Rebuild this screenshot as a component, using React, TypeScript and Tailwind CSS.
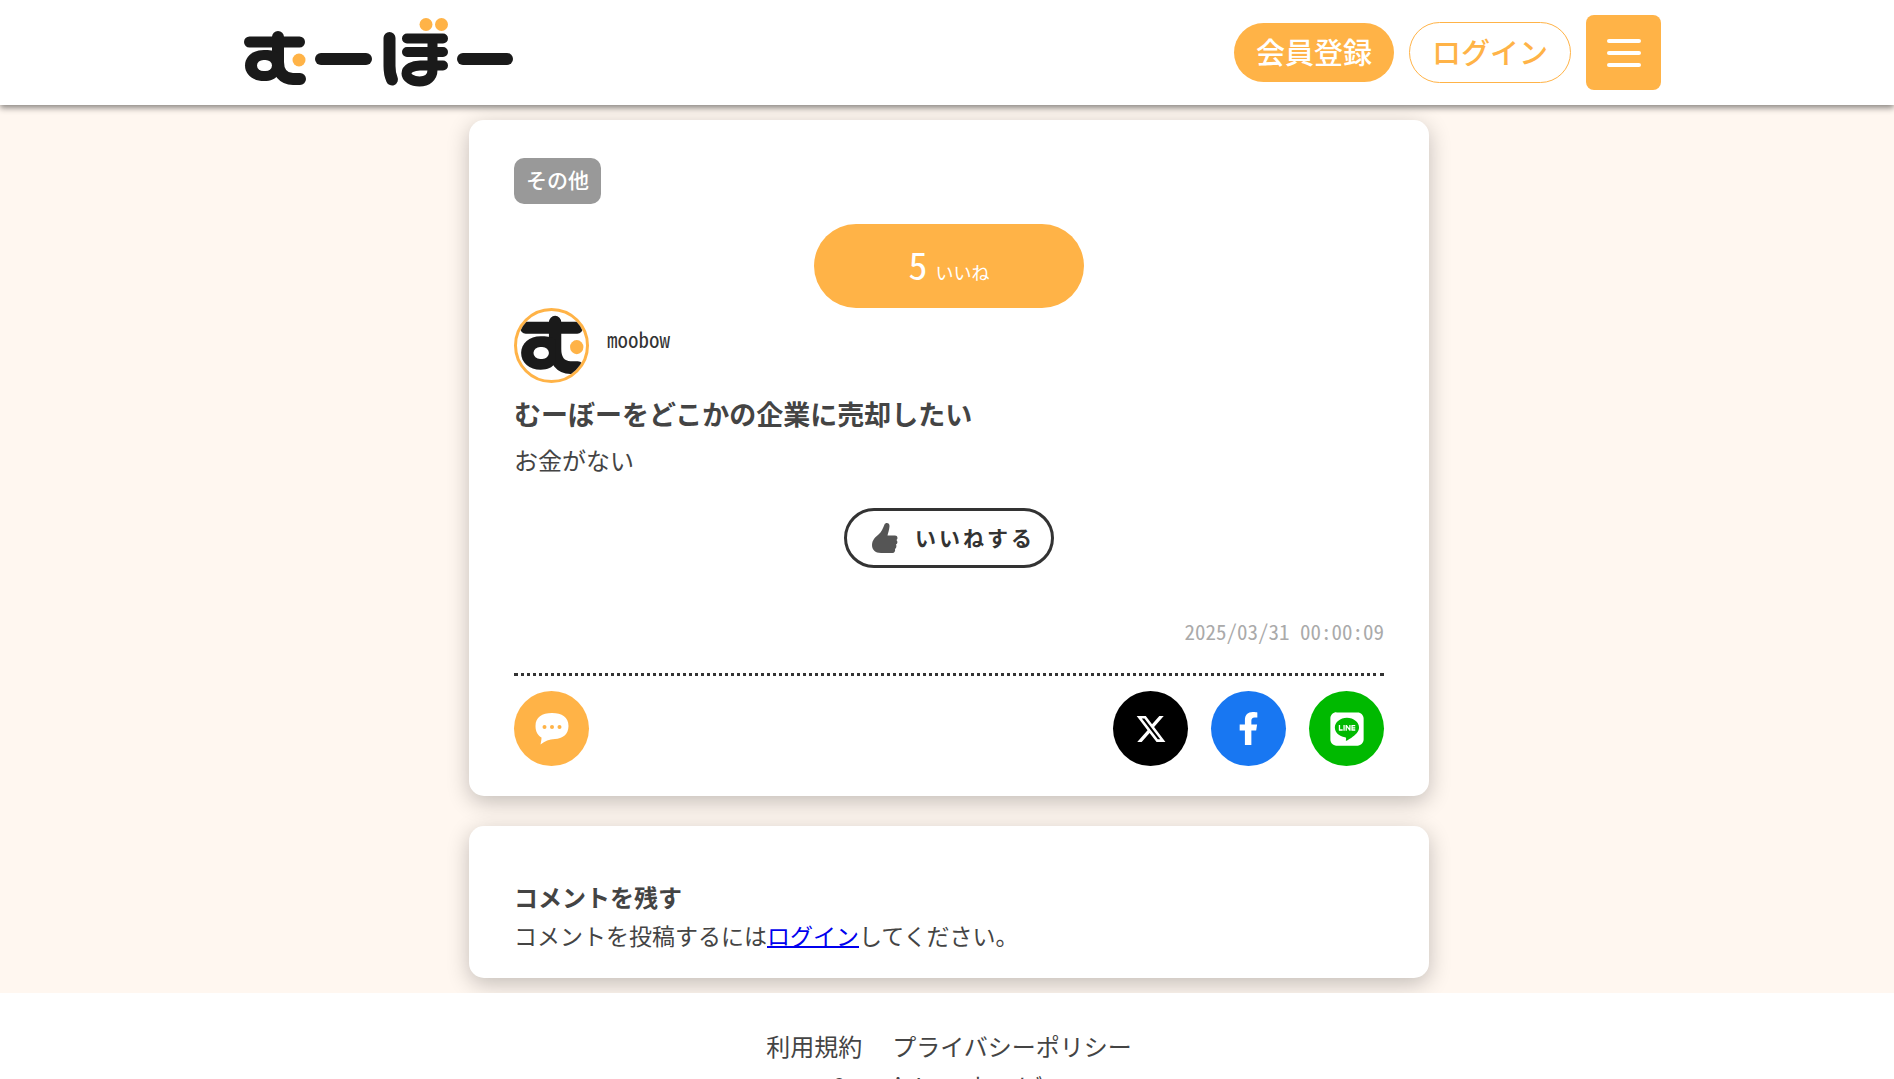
import { FaFacebookF, FaLine } from "react-icons/fa";
import { FaXTwitter } from "react-icons/fa6";

const shareLinks = [
  { name: "X", color: "bg-black", icon: <FaXTwitter size={32} /> },
  { name: "Facebook", color: "bg-[#1877f2]", icon: <FaFacebookF size={33} /> },
  { name: "LINE", color: "bg-[#00b900]", icon: <FaLine size={38} /> },
];

function MuMark() {
  return (
    <>
      <g fill="none" stroke="#1a1a1a" strokeLinecap="round" strokeLinejoin="round">
        <path d="M19.5 42H69.5" strokeWidth="11" />
        <path d="M48 37V62C48 72 53 79 63 79H70" strokeWidth="12" />
      </g>
      <path fill="#1a1a1a" d="M48 53C44 50 39 50 34 50C23 50 15 56.500 15 65.500C15 74.500 23 81 34 81C41 81 45 79 48 75Z" />
      <rect x="27" y="60" width="15" height="11" rx="6.500" ry="5.500" fill="#fff" />
      <circle cx="69" cy="60" r="6.500" fill="#ffb347" />
    </>
  );
}

function Logo() {
  return (
    <svg className="h-[75px] w-[280px]" viewBox="11 15 280 75" role="img" aria-label="むーぼー">
      <MuMark />
      <g fill="none" stroke="#1a1a1a" strokeLinecap="round" strokeLinejoin="round" strokeWidth="12">
        <path d="M91 59H136" />
        <path d="M233 59H277" />
        <path d="M159.500 38V66Q159.500 74 162 79.500" />
        <path d="M177 38.500H213M177 52H213" strokeWidth="10" />
        <path d="M202.500 39V70C202.500 77 197 81.500 189.500 81.500C182 81.500 176.500 77.500 176.500 73.500C176.500 68.500 183 65.500 190 65.500H213" strokeWidth="10" />
      </g>
      <circle cx="196" cy="24.500" r="6.500" fill="#ffb347" />
      <circle cx="211.500" cy="24.500" r="6.500" fill="#ffb347" />
    </svg>
  );
}

export default function App() {
  return (
    <div className="min-h-screen bg-white font-['Noto_Sans_CJK_JP',sans-serif] text-[#444] [font-feature-settings:'hwid']">
      <header className="relative bg-white shadow-[0_3px_6px_rgba(0,0,0,0.45)]">
        <div className="mx-auto flex max-w-[1428px] items-center justify-between py-[15px] pl-2">
          <a href="#">
            <Logo />
          </a>
          <nav className="flex items-center gap-[15px]">
            <a href="#" className="rounded-full bg-[#ffb347] px-[22px] pt-[7px] pb-[9px] text-[29px] leading-[43px] font-medium text-white">
              会員登録
            </a>
            <a href="#" className="rounded-full border border-[#ffb347] px-[22px] pt-[7px] pb-[9px] text-[29px] leading-[43px] font-medium text-[#ffb347]">
              ログイン
            </a>
            <button aria-label="メニュー" className="flex size-[75px] flex-col items-center justify-center gap-2 rounded-lg bg-[#ffb347]">
              <span className="h-1 w-[34px] rounded-sm bg-white" />
              <span className="h-1 w-[34px] rounded-sm bg-white" />
              <span className="h-1 w-[34px] rounded-sm bg-white" />
            </button>
          </nav>
        </div>
      </header>

      <main className="flex flex-col items-center gap-[30px] overflow-hidden bg-[#fff7f0] py-[15px] pl-1">
        <article className="w-full max-w-[960px] rounded-[15px] bg-white px-[45px] pt-[38px] pb-[30px] shadow-[0_6px_22px_rgba(0,0,0,0.24)]">
          <span className="block w-fit rounded-[10px] bg-[#999] px-3 pt-1.5 pb-2.5 text-[21px] leading-[30px] font-medium text-white">
            その他
          </span>
          <div className="mx-auto mt-5 flex h-[84px] w-[270px] items-baseline justify-center gap-2 rounded-full bg-[#ffb347] text-white">
            <span className="text-[38px] leading-[80px]">5</span>
            <span className="text-lg">いいね</span>
          </div>

          <div className="flex items-center gap-[18px]">
            <span className="size-[75px] overflow-hidden rounded-full border-3 border-[#ffb347]">
              <svg className="size-full" viewBox="11 26.500 67 64" preserveAspectRatio="none" role="img" aria-label="moobow">
                <MuMark />
              </svg>
            </span>
            <a href="#" className="pb-3.5 text-[21px] leading-[30px] text-[#333]">moobow</a>
          </div>

          <h1 className="mt-[11px] text-[27px] leading-10 font-bold">むーぼーをどこかの企業に売却したい</h1>
          <p className="mt-2 text-2xl leading-9">お金がない</p>

          <button className="mx-auto mt-[30px] flex h-[60px] w-[210px] items-center justify-center gap-4 rounded-full border-3 border-[#333] pb-px pl-2 text-[21px] font-bold text-[#333]">
            <svg className="h-8 w-7 text-[#555]" viewBox="0 0 28 32" fill="currentColor" aria-hidden="true">
              <path d="M13.500 2.500C14.500 0 19 .5 18.500 4.500C18.200 8 17 11 16.500 13.500H24C27 13.500 27 17 25.500 18C27 19.500 26.500 22 25 22.500C26 24 25 26.500 24 27C24.500 29 23.500 31 21.500 31H10C4 31 1 27.500 1 23C1 18 4.500 15 7.500 12.500C10.500 10 12 6 13.500 2.500Z" />
            </svg>
            <span className="tracking-[3px]">いいねする</span>
          </button>

          <time className="mt-[47px] block text-right text-[21px] leading-8 text-[#aaa]">2025/03/31 00:00:09</time>
          <div className="mt-[26px] flex items-center justify-between border-t-3 border-dotted border-[#333] pt-[15px]">
            <button aria-label="コメント" className="flex size-[75px] items-center justify-center rounded-full bg-[#ffb347]">
              <svg className="h-8 w-[34px]" viewBox="0 0 34 32" aria-hidden="true">
                <path fill="#fff" d="M17 0C27 0 33.500 4 33.500 13C33.500 22 27 25.500 20 26C14 26.200 10 28 5.500 31.500C6 29 6.500 27 6.500 24.500C3 22.500 .5 19 .5 13C.5 4 7 0 17 0Z" />
                <g fill="#ffb347">
                  <circle cx="9.500" cy="14" r="2" />
                  <circle cx="17" cy="14" r="2" />
                  <circle cx="24.500" cy="14" r="2" />
                </g>
              </svg>
            </button>
            <div className="flex gap-[23px]">
              {shareLinks.map((link) => (
                <a
                  key={link.name}
                  href="#"
                  aria-label={link.name}
                  className={`flex size-[75px] items-center justify-center rounded-full text-white ${link.color}`}
                >
                  {link.icon}
                </a>
              ))}
            </div>
          </div>
        </article>

        <section className="w-full max-w-[960px] rounded-[15px] bg-white px-[45px] pt-[52px] pb-6 shadow-[0_6px_22px_rgba(0,0,0,0.24)]">
          <h2 className="text-2xl leading-[38px] font-bold">コメントを残す</h2>
          <p className="text-[23px] leading-[38px]">
            コメントを投稿するには
            <a href="#" className="text-[#0000ee] underline decoration-2">ログイン</a>
            してください。
          </p>
        </section>
      </main>

      <footer className="pt-[35px] pl-1 text-2xl leading-9">
        <nav className="flex justify-center gap-[30px]">
          <a href="#">利用規約</a>
          <a href="#">プライバシーポリシー</a>
        </nav>
        <p className="mt-1 flex justify-center gap-[30px]">
          <span>Copyright</span>
          <span>むーぼー</span>
        </p>
      </footer>
    </div>
  );
}
